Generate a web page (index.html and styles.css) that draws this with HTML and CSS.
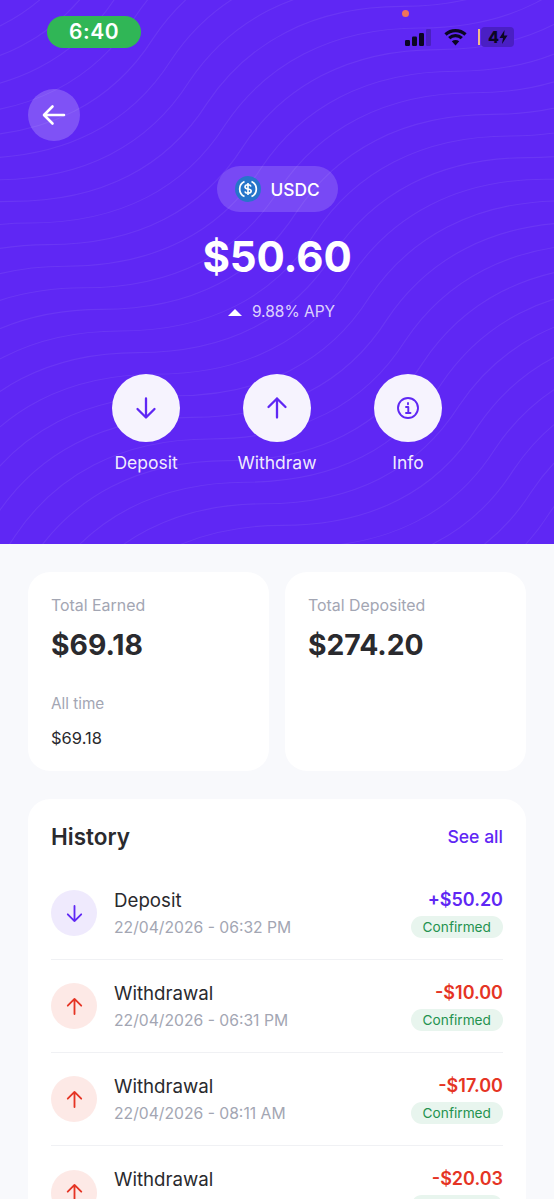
FILE: index.html
```html
<!DOCTYPE html>
<html lang="en">
<head>
<meta charset="utf-8">
<title>USDC</title>
<link rel="stylesheet" href="styles.css">
</head>
<body>
<div class="page">
  <header class="hero">
    <svg class="waves" viewBox="0 0 554 544" aria-hidden="true">
      <defs>
        <path id="w" d="M-1140 808c90 0 155 -35 195 -98c40 -60 105 -97 195 -97c90 0 155 -35 195 -98c40 -60 105 -97 195 -97c90 0 155 -35 195 -98c40 -60 105 -97 195 -97c90 0 155 -35 195 -98c40 -60 105 -97 195 -97c90 0 155 -35 195 -98c40 -60 105 -97 195 -97c90 0 155 -35 195 -98c40 -60 105 -97 195 -97"/>
        <g id="w6">
          <use href="#w"/><use href="#w" x="-18" y="-21.6"/><use href="#w" x="-36" y="-43.2"/>
          <use href="#w" x="-54" y="-64.8"/><use href="#w" x="-72" y="-86.4"/><use href="#w" x="-90" y="-108"/>
        </g>
      </defs>
      <g class="wave-lines">
        <use href="#w6" x="432" y="518.4"/>
        <use href="#w6" x="324" y="388.8"/>
        <use href="#w6" x="216" y="259.2"/>
        <use href="#w6" x="108" y="129.6"/>
        <use href="#w6"/>
        <use href="#w6" x="-108" y="-129.6"/>
      </g>
    </svg>

    <div class="status">
      <span class="time">6:40</span>
      <span class="dot"></span>
      <div class="status-icons">
        <svg class="signal" width="28" height="17" viewBox="0 0 28 17"><rect x="0" y="11" width="5" height="6" rx="1.2"/><rect x="7" y="7.5" width="5" height="9.5" rx="1.2"/><rect x="14" y="4" width="5" height="13" rx="1.2"/><rect class="signal-off" x="21" y="0" width="5" height="17" rx="1.2"/></svg>
        <svg class="wifi" width="23" height="18" viewBox="0 0 23 18"><path d="M1.5 6.5C7 1.2 16 1.2 21.5 6.5" /><path d="M5.2 10.2C8.8 6.8 14.2 6.8 17.8 10.2"/><path class="wifi-tip" d="M11.5 17.5L7.8 13.2C10 11.6 13 11.6 15.2 13.2Z"/></svg>
        <div class="battery"><span class="battery-level"></span><span class="battery-body">4<svg width="9" height="14" viewBox="0 0 9 14"><path d="M5.6 0L0.5 8H4L3 14L8.5 5.6H5Z"/></svg></span></div>
      </div>
    </div>

    <button class="back" aria-label="Back">
      <svg width="26" height="26" viewBox="0 0 26 26"><path d="M23 13H3.5M11.5 4.5L3 13L11.5 21.5"/></svg>
    </button>

    <div class="summary">
      <div class="coin">
        <svg width="26" height="26" viewBox="0 0 26 26"><circle class="coin-bg" cx="13" cy="13" r="13"/><path class="coin-ring" d="M9.5 5.4A8.4 8.4 0 0 0 9.5 20.6M16.5 5.4A8.4 8.4 0 0 1 16.5 20.6"/><path class="coin-s" d="M16 10.4C15.6 9.2 14.4 8.8 13 8.8C11.4 8.8 10 9.5 10 11C10 14 16.2 12.1 16.2 15.1C16.2 16.6 14.7 17.2 13 17.2C11.5 17.2 10.2 16.7 9.8 15.4M13 7V19"/></svg>
        <span>USDC</span>
      </div>
      <div class="balance">$50.60</div>
      <div class="apy"><span class="tri"></span>9.88% APY</div>
    </div>

    <nav class="actions">
      <div class="action">
        <span class="action-circle"><svg class="ico" width="24" height="24" viewBox="0 0 24 24"><path d="M12 2.5V21.5M3.5 13L12 21.5L20.5 13"/></svg></span>
        <span class="action-label">Deposit</span>
      </div>
      <div class="action">
        <span class="action-circle"><svg class="ico" width="24" height="24" viewBox="0 0 24 24"><path d="M12 21.5V2.5M3.5 11L12 2.5L20.5 11"/></svg></span>
        <span class="action-label">Withdraw</span>
      </div>
      <div class="action">
        <span class="action-circle"><svg class="ico ico-thin" width="24" height="24" viewBox="0 0 24 24"><circle cx="12" cy="12" r="10"/><path d="M10 11H12.3V17M10 17H14.5"/><path d="M12 7V8.2"/></svg></span>
        <span class="action-label">Info</span>
      </div>
    </nav>
  </header>

  <main class="content">
    <section class="stats">
      <div class="card stat">
        <div class="stat-label">Total Earned</div>
        <div class="stat-value">$69.18</div>
        <div class="stat-sub-label">All time</div>
        <div class="stat-sub-value">$69.18</div>
      </div>
      <div class="card stat">
        <div class="stat-label">Total Deposited</div>
        <div class="stat-value">$274.20</div>
      </div>
    </section>

    <section class="card history">
      <div class="history-head">
        <h2>History</h2>
        <a class="see-all">See all</a>
      </div>

      <div class="tx">
        <span class="tx-icon in"><svg class="ico" width="19" height="19" viewBox="0 0 24 24"><path d="M12 2.5V21.5M3.5 13L12 21.5L20.5 13"/></svg></span>
        <div class="tx-main"><div class="tx-name">Deposit</div><div class="tx-date">22/04/2026 - 06:32 PM</div></div>
        <div class="tx-side"><div class="tx-amt pos">+$50.20</div><span class="badge">Confirmed</span></div>
      </div>
      <div class="tx">
        <span class="tx-icon out"><svg class="ico" width="19" height="19" viewBox="0 0 24 24"><path d="M12 21.5V2.5M3.5 11L12 2.5L20.5 11"/></svg></span>
        <div class="tx-main"><div class="tx-name">Withdrawal</div><div class="tx-date">22/04/2026 - 06:31 PM</div></div>
        <div class="tx-side"><div class="tx-amt neg">-$10.00</div><span class="badge">Confirmed</span></div>
      </div>
      <div class="tx">
        <span class="tx-icon out"><svg class="ico" width="19" height="19" viewBox="0 0 24 24"><path d="M12 21.5V2.5M3.5 11L12 2.5L20.5 11"/></svg></span>
        <div class="tx-main"><div class="tx-name">Withdrawal</div><div class="tx-date">22/04/2026 - 08:11 AM</div></div>
        <div class="tx-side"><div class="tx-amt neg">-$17.00</div><span class="badge">Confirmed</span></div>
      </div>
      <div class="tx">
        <span class="tx-icon out"><svg class="ico" width="19" height="19" viewBox="0 0 24 24"><path d="M12 21.5V2.5M3.5 11L12 2.5L20.5 11"/></svg></span>
        <div class="tx-main"><div class="tx-name">Withdrawal</div><div class="tx-date">22/04/2026 - 08:05 AM</div></div>
        <div class="tx-side"><div class="tx-amt neg">-$20.03</div><span class="badge">Confirmed</span></div>
      </div>
    </section>
  </main>
</div>
</body>
</html>
```

FILE: styles.css
```css
* { box-sizing: border-box; }
html, body { margin: 0; padding: 0; height: 100%; }
body { overflow: hidden; background: #f8f9fc; font-family: Inter, "Liberation Sans", sans-serif; color: #2a2a2e; }
.page { height: 1199px; overflow: hidden; }

.hero { position: relative; height: 544px; background: #5f27f4; padding: 16px 28px 0; overflow: hidden; }
.waves { position: absolute; inset: 0; width: 554px; height: 544px; pointer-events: none; }
.wave-lines { fill: none; stroke: #ffffff; stroke-opacity: 0.07; stroke-width: 1.1; }

.status { position: relative; display: flex; justify-content: space-between; align-items: flex-start; height: 73px; }
.time { margin-left: 19px; width: 94px; height: 32px; border-radius: 16px; background: #30b656; color: #fff; font-size: 21px; font-weight: 600; letter-spacing: 0.5px; line-height: 32px; text-align: center; }
.dot { position: absolute; left: 374px; top: -6px; width: 7px; height: 7px; border-radius: 50%; background: #f0735a; }
.status-icons { display: flex; align-items: center; gap: 11px; margin: 11px 12px 0 0; }
.signal { fill: #0b0622; margin-top: 1px; }
.signal-off { fill: #4a20c0; }
.wifi { fill: none; stroke: #0b0622; stroke-width: 3.2; }
.wifi-tip { fill: #0b0622; stroke: none; }
.battery { display: flex; align-items: center; gap: 1px; }
.battery-level { width: 2px; height: 16px; background: #f1b98a; }
.battery-body { display: flex; align-items: center; justify-content: center; width: 33px; height: 20px; padding-left: 1px; border-radius: 4px; background: #4a1fc4; color: #0b0622; font-size: 16px; font-weight: 800; line-height: 20px; }
.battery-body svg { fill: #0b0622; }

.back { display: flex; align-items: center; justify-content: center; position: relative; width: 52px; height: 52px; padding: 0; border: 0; border-radius: 50%; background: rgba(255,255,255,0.2); }
.back path { fill: none; stroke: #fff; stroke-width: 2.6; stroke-linecap: round; stroke-linejoin: round; }

.summary { position: relative; display: flex; flex-direction: column; align-items: center; margin-top: 25px; }
.coin { display: flex; align-items: center; gap: 10px; height: 46px; width: 121px; padding-left: 18px; border-radius: 23px; background: rgba(255,255,255,0.16); color: #fff; font-size: 17.3px; font-weight: 500; }
.coin svg { flex: none; }
.coin-bg { fill: #2775ca; }
.coin-ring { fill: none; stroke: #fff; stroke-width: 1.7; }
.coin-s { fill: none; stroke: #fff; stroke-width: 1.6; }
.balance { margin-top: 16px; color: #fff; font-size: 42px; font-weight: 700; line-height: 58px; letter-spacing: -0.1px; }
.apy { display: flex; align-items: center; gap: 10px; margin-top: 16px; padding-left: 9px; color: rgba(255,255,255,0.8); font-size: 15.5px; line-height: 20px; }
.tri { width: 0; height: 0; border-left: 7.5px solid transparent; border-right: 7.5px solid transparent; border-bottom: 7px solid #fff; }

.actions { position: relative; display: flex; justify-content: center; gap: 63px; margin-top: 52px; }
.action { display: flex; flex-direction: column; align-items: center; width: 68px; }
.action-circle { display: flex; align-items: center; justify-content: center; width: 68px; height: 68px; border-radius: 50%; background: #f6f3fe; }
.action-label { margin-top: 10px; color: rgba(255,255,255,0.92); font-size: 17.5px; line-height: 22px; white-space: nowrap; }
.ico { fill: none; stroke: #5f27f4; stroke-width: 2.3; stroke-linecap: round; stroke-linejoin: round; }
.ico-thin { stroke-width: 1.9; }

.content { padding: 28px 28px 0; }
.stats { display: grid; grid-template-columns: 1fr 1fr; gap: 16px; }
.card { background: #fff; border-radius: 22px; }
.stat { height: 199px; padding: 23px 23px 0; }
.stat-label { color: #a3a6b3; font-size: 15.9px; line-height: 21px; }
.stat-value { margin-top: 10px; color: #2a2a2e; font-size: 28.3px; font-weight: 700; line-height: 38px; }
.stat-sub-label { margin-top: 30px; color: #a3a6b3; font-size: 15.3px; line-height: 20px; }
.stat-sub-value { margin-top: 13px; color: #2a2a2e; font-size: 16.5px; font-weight: 400; line-height: 22px; }

.history { margin-top: 28px; padding: 22px 23px 0; }
.history-head { display: flex; justify-content: space-between; align-items: center; height: 30px; margin-bottom: 16px; }
.history-head h2 { margin: 0; font-size: 22.5px; font-weight: 600; color: #2a2a2e; }
.see-all { color: #5f27f4; font-size: 17.6px; font-weight: 500; }

.tx { display: flex; align-items: center; height: 93px; border-bottom: 1px solid #f0f1f4; }
.tx:last-child { border-bottom: 0; }
.tx-icon { display: flex; align-items: center; justify-content: center; flex: none; width: 46px; height: 46px; border-radius: 50%; margin-right: 17px; }
.tx-icon.in { background: #efeafd; }
.tx-icon.out { background: #fde9e6; }
.tx-icon.out .ico { stroke: #e53424; }
.tx-main { flex: 1; padding-top: 1px; }
.tx-name { color: #2a2a2e; font-size: 18.7px; font-weight: 400; line-height: 24px; }
.tx-date { margin-top: 4px; color: #a3a6b3; font-size: 15.7px; line-height: 22px; }
.tx-side { display: flex; flex-direction: column; align-items: flex-end; }
.tx-amt { font-size: 18px; font-weight: 600; line-height: 24px; margin-top: -1px; }
.pos { color: #5f27f4; }
.neg { color: #e53424; }
.badge { margin-top: 4px; height: 22px; padding: 0 12px; border-radius: 11px; background: #e8f5ee; color: #23924f; font-size: 13.7px; line-height: 22px; }
```
